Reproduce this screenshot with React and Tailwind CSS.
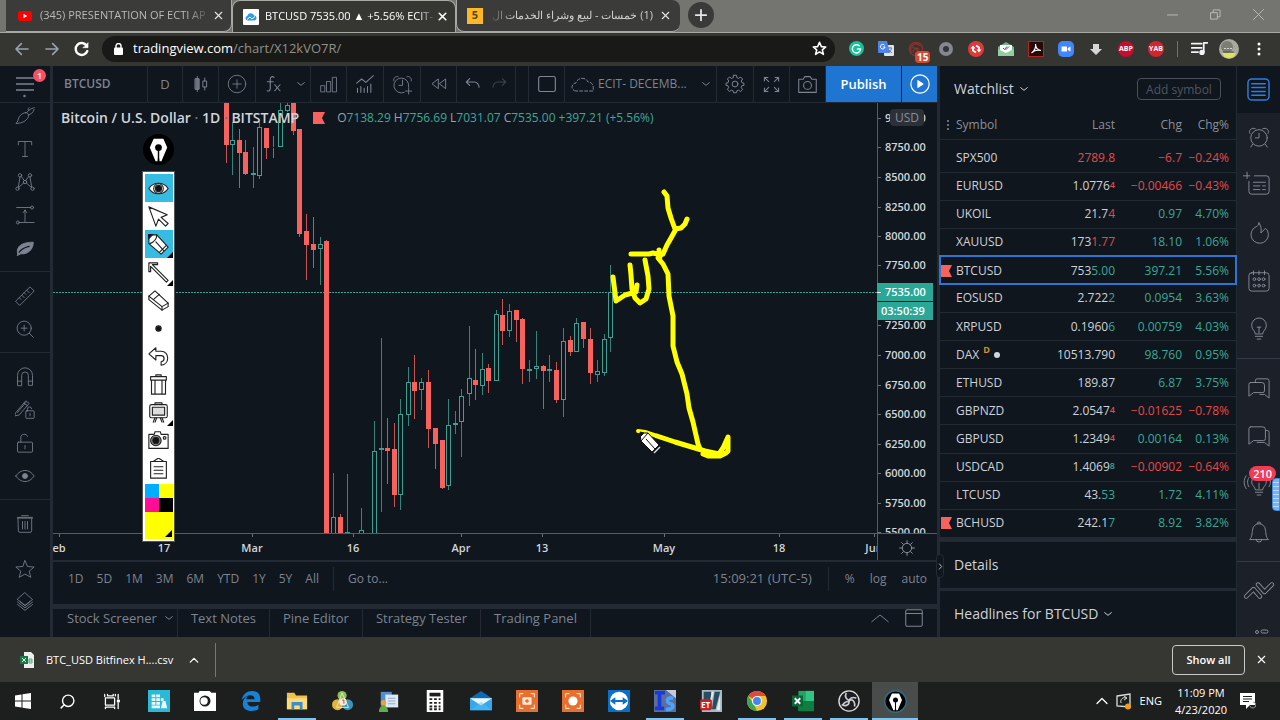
import React from 'react';
import { Search, X } from 'lucide-react';

const UP = '#3f9f92';
const DOWN = '#f7625f';

// [x, wick top, body top, body bottom, wick bottom, rising]
const candles = [
    [226, 103, 103, 145, 163, 0],
    [232, 122, 140, 145, 175, 1],
    [239, 129, 140, 153, 188, 0],
    [245, 140, 152, 174, 175, 0],
    [253, 147, 173, 175, 188, 1],
    [259, 122, 127, 176, 179, 1],
    [266, 128, 128, 148, 159, 0],
    [273, 136, 147, 148, 158, 0],
    [280, 103, 110, 147, 147, 1],
    [287, 103, 105, 111, 112, 1],
    [293, 103, 103, 131, 135, 0],
    [299, 129, 129, 234, 237, 0],
    [306, 214, 231, 245, 280, 0],
    [313, 217, 244, 250, 268, 0],
    [320, 237, 244, 249, 285, 1],
    [326, 240, 241, 536, 536, 0],
    [333, 473, 517, 536, 536, 1],
    [340, 514, 517, 536, 536, 0],
    [347, 474, 532, 536, 536, 1],
    [361, 508, 530, 536, 536, 1],
    [374, 421, 451, 536, 536, 1],
    [381, 338, 448, 450, 512, 1],
    [387, 418, 448, 451, 484, 0],
    [394, 423, 449, 495, 507, 0],
    [400, 399, 414, 495, 510, 1],
    [408, 367, 382, 415, 426, 1],
    [414, 355, 382, 391, 419, 0],
    [421, 378, 382, 390, 410, 1],
    [428, 370, 382, 429, 448, 0],
    [435, 428, 428, 444, 469, 0],
    [442, 440, 440, 488, 489, 0],
    [448, 399, 425, 486, 490, 1],
    [455, 411, 423, 425, 434, 1],
    [461, 389, 396, 422, 457, 1],
    [469, 326, 378, 394, 406, 1],
    [475, 349, 380, 385, 400, 0],
    [482, 353, 369, 386, 395, 1],
    [488, 364, 368, 381, 393, 0],
    [496, 310, 314, 381, 381, 1],
    [502, 299, 315, 331, 345, 0],
    [509, 304, 311, 331, 337, 1],
    [516, 310, 310, 320, 342, 0],
    [522, 318, 319, 369, 384, 0],
    [529, 360, 369, 371, 382, 1],
    [536, 331, 366, 369, 379, 1],
    [543, 365, 366, 371, 409, 0],
    [549, 355, 369, 371, 382, 1],
    [556, 362, 370, 400, 403, 0],
    [563, 328, 341, 400, 417, 1],
    [570, 336, 340, 352, 356, 0],
    [576, 318, 323, 352, 352, 1],
    [583, 322, 322, 339, 348, 0],
    [590, 328, 339, 373, 384, 0],
    [597, 360, 371, 375, 382, 1],
    [604, 334, 339, 373, 376, 1],
    [610, 265, 292, 338, 352, 1],
];

const prices = [
    ['9000.00', 118], ['8750.00', 147], ['8500.00', 177], ['8250.00', 207], ['8000.00', 236],
    ['7750.00', 265], ['7250.00', 325], ['7000.00', 355], ['6750.00', 385], ['6500.00', 414],
    ['6250.00', 444], ['6000.00', 473], ['5750.00', 503], ['5500.00', 532],
];

const dates = [
    ['eb', 59], ['17', 164], ['Mar', 252], ['16', 353], ['Apr', 461], ['13', 542], ['May', 664], ['18', 779], ['Jun', 874],
];

// last price is split where the latest tick changed it
const watchlist = [
    { symbol: 'SPX500', base: '', tick: '2789.8', tickUp: false, chg: '−6.7', pct: '−0.24%' },
    { symbol: 'EURUSD', base: '1.0776', tick: '4', tickUp: false, small: true, chg: '−0.00466', pct: '−0.43%' },
    { symbol: 'UKOIL', base: '21.7', tick: '4', tickUp: false, chg: '0.97', pct: '4.70%' },
    { symbol: 'XAUUSD', base: '173', tick: '1.77', tickUp: false, chg: '18.10', pct: '1.06%' },
    { symbol: 'BTCUSD', base: '753', tick: '5.00', tickUp: true, chg: '397.21', pct: '5.56%', flag: true, active: true },
    { symbol: 'EOSUSD', base: '2.722', tick: '2', tickUp: true, chg: '0.0954', pct: '3.63%' },
    { symbol: 'XRPUSD', base: '0.1960', tick: '6', tickUp: true, chg: '0.00759', pct: '4.03%' },
    { symbol: 'DAX', base: '10513.790', tick: '', chg: '98.760', pct: '0.95%', delayed: true },
    { symbol: 'ETHUSD', base: '189.87', tick: '', chg: '6.87', pct: '3.75%' },
    { symbol: 'GBPNZD', base: '2.0547', tick: '4', tickUp: false, small: true, chg: '−0.01625', pct: '−0.78%' },
    { symbol: 'GBPUSD', base: '1.2349', tick: '4', tickUp: false, small: true, chg: '0.00164', pct: '0.13%' },
    { symbol: 'USDCAD', base: '1.4069', tick: '8', tickUp: true, small: true, chg: '−0.00902', pct: '−0.64%' },
    { symbol: 'LTCUSD', base: '43.', tick: '53', tickUp: true, chg: '1.72', pct: '4.11%' },
    { symbol: 'BCHUSD', base: '242.1', tick: '7', tickUp: true, chg: '8.92', pct: '3.82%', flag: true },
];

function Icon({ size = 24, className = '', width = 1, children }) {
    return (
        <svg
            width={size}
            height={size}
            viewBox="0 0 24 24"
            fill="none"
            stroke="currentColor"
            strokeWidth={width}
            strokeLinecap="round"
            strokeLinejoin="round"
            className={`shrink-0 ${className}`}
            aria-hidden="true"
        >
            {children}
        </svg>
    );
}

function Chevron({ className = '' }) {
    return <Icon size={8} width={3} className={className}><path d="M2 8l10 8 10-8" /></Icon>;
}

/* ---------- browser window ---------- */

function TabBar() {
    return (
        <div className="flex h-8 items-stretch bg-[#747571] pl-1.5 text-xs">
            <div className="flex w-[226px] min-w-0 items-center rounded-br-lg border-b border-r border-[#a8a8a5] bg-[#3b3b39] pl-3 pr-1.5">
                <svg width="14" height="10" viewBox="0 0 14 10" className="shrink-0"><rect width="14" height="10" rx="2.5" fill="#f00" /><path d="M5.5 2.8v4.4L9.3 5z" fill="#fff" /></svg>
                <span className="ml-2 flex-1 whitespace-nowrap text-[11px] text-[#b9b9b7] [mask-image:linear-gradient(to_right,#000_85%,transparent)]">(345) PRESENTATION OF ECTI AP</span>
                <button aria-label="Close tab" className="text-gray-200"><X size={13} strokeWidth={2} /></button>
            </div>
            <div className="flex w-[224px] min-w-0 items-center rounded-t-lg border-x border-t border-[#a8a8a5] bg-[#363633] pl-2.5 pr-1.5">
                <svg width="16" height="16" viewBox="0 0 16 16" className="shrink-0">
                    <rect width="16" height="16" rx="1" fill="#fff" />
                    <path d="M4.5 11.5a2.3 2.3 0 0 1-.3-4.5A3.6 3.6 0 0 1 11 6.4a2.6 2.6 0 0 1 .6 5.1z" fill="#2f9be8" />
                    <path d="M4 10.5L7 8l2 2 3-2.5" stroke="#fff" fill="none" />
                </svg>
                <span className="ml-1.5 flex-1 whitespace-nowrap text-[11px] text-white [mask-image:linear-gradient(to_right,#000_90%,transparent)]">BTCUSD 7535.00 ▲ +5.56% ECIT-</span>
                <button aria-label="Close tab" className="text-white"><X size={13} strokeWidth={3} /></button>
            </div>
            <div className="flex w-[224px] min-w-0 items-center rounded-b-lg rounded-tr-lg border-b border-l border-[#a8a8a5] bg-[#3b3b39] pl-2.5 pr-2">
                <span className="flex size-4 shrink-0 items-center justify-center bg-[#fcb827] text-[11px] font-bold text-[#5a4310]">5</span>
                <span dir="rtl" className="ml-1.5 flex-1 whitespace-nowrap text-[11px] text-[#cfcfcd] [mask-image:linear-gradient(to_left,#000_85%,transparent)]">(1) خمسات - لبيع وشراء الخدمات ال</span>
                <button aria-label="Close tab" className="ml-1.5 text-gray-200"><X size={13} strokeWidth={2} /></button>
            </div>
            <button aria-label="New tab" className="ml-2 mt-0.5 flex size-[26px] items-center justify-center rounded-full bg-[#3a3a38] text-gray-200">
                <Icon size={14} width={3}><path d="M12 3v18M3 12h18" /></Icon>
            </button>
            <div className="ml-auto flex items-center gap-8 pb-1 pr-4 text-[#bdbdbb]">
                <button aria-label="Minimize"><Icon size={11} width={2}><path d="M1 13h22" /></Icon></button>
                <button aria-label="Restore"><Icon size={11} width={2}><path d="M2 8h14v14H2zM7 8V2h15v15h-6" /></Icon></button>
                <button aria-label="Close"><Icon size={11} width={2}><path d="M1 1l22 22M23 1L1 23" /></Icon></button>
            </div>
        </div>
    );
}

function Extensions() {
    return (
        <div className="flex items-center">
            <button aria-label="Grammarly" className="flex w-[30px] justify-center">
                <span className="flex size-[15px] items-center justify-center rounded-full bg-[#15c39a]">
                    <Icon size={11} width={3} className="text-white"><path d="M18 6a9 9 0 1 0 3 7h-7" /></Icon>
                </span>
            </button>
            <button aria-label="Translate" className="flex w-[30px] justify-center">
                <svg width="16" height="16" viewBox="0 0 16 16">
                    <rect x="6" y="4" width="10" height="11" rx="1" fill="#dfe3ea" />
                    <path d="M0 0h9l3 12H1a1 1 0 0 1-1-1z" fill="#4c84e8" />
                    <path d="M6.5 4.2A2.3 2.3 0 1 0 7 6H5" stroke="#fff" fill="none" />
                    <path d="M10 7h4M12 6v1m1.5 0c0 2-2 4-3 4.500M11 9l3 3" stroke="#5b6b85" fill="none" strokeWidth=".8" />
                </svg>
            </button>
            <button aria-label="Blocked, 15" className="relative flex w-[30px] justify-center">
                <Icon size={16} width={2} className="text-[#8f2f2a]"><circle cx="12" cy="12" r="10" /><path d="M5 16a8 8 0 0 1 13-9M8 17a5 5 0 0 1 8-5M6 8l12 9" /></Icon>
                <span className="absolute -bottom-1.5 left-3.5 rounded-sm bg-[#d9492f] px-0.5 text-[10px] font-bold leading-3 text-white">15</span>
            </button>
            <button aria-label="Lens" className="flex w-[30px] justify-center">
                <span className="flex size-[14px] items-center justify-center rounded-full bg-[#85868f]"><span className="size-1.5 rounded-full bg-[#33343a]" /></span>
            </button>
            <button aria-label="Refresh helper" className="flex w-[30px] justify-center">
                <svg width="16" height="16" viewBox="0 0 16 16"><circle cx="8" cy="8" r="8" fill="#e0393a" /><path d="M5 6v3.500l3 2M11 10V6.500l-3-2" stroke="#fff" strokeWidth="1.800" fill="none" /><path d="M2.500 7.500l2.500-3 2.500 3zM8.500 8.500l2.500 3 2.500-3z" fill="#fff" /></svg>
            </button>
            <button aria-label="Mail tracker" className="flex w-[30px] justify-center">
                <svg width="16" height="14" viewBox="0 0 16 14">
                    <path d="M0 5l8-5 8 5v9H0z" fill="#6fb583" /><path d="M2 3h12v6l-6 3-6-3z" fill="#fff" />
                    <path d="M5 6l1.500 1.500L9 4.500M7.500 7L8 7.500 11 4.500" stroke="#557" fill="none" /><path d="M0 7l8 4 8-4v7H0z" fill="#8fd0a0" />
                </svg>
            </button>
            <button aria-label="PDF" className="flex w-[30px] justify-center">
                <svg width="16" height="16" viewBox="0 0 16 16">
                    <rect x=".5" y=".5" width="15" height="15" fill="#260a0a" stroke="#b3261e" />
                    <path d="M7.500 3c1 3-1 7-4 9M7.500 3c0 4 2 6 5.500 6.500M4 11.500C6 9.500 9 8.800 13 9.500" stroke="#fff" fill="none" strokeWidth="1.200" />
                </svg>
            </button>
            <button aria-label="Zoom" className="flex w-[30px] justify-center">
                <svg width="16" height="16" viewBox="0 0 16 16"><rect width="16" height="16" rx="5" fill="#4087fc" /><path d="M3.500 5.500h5.500v5H3.500zM9.800 7l2.700-1.500v5L9.800 9z" fill="#fff" /></svg>
            </button>
            <button aria-label="Downloader" className="flex w-[30px] justify-center">
                <svg width="12" height="12" viewBox="0 0 12 12"><path d="M3 1h6v5h3l-6 6-6-6h3z" fill="#d6d6d6" /></svg>
            </button>
            <button aria-label="Adblock Plus" className="flex w-[30px] justify-center">
                <span className="flex size-4 items-center justify-center rounded-full bg-[#c70d2c] text-[7px] font-bold text-white">ABP</span>
            </button>
            <button aria-label="YAB" className="flex w-[30px] justify-center">
                <span className="flex size-4 items-center justify-center rounded-full bg-[#d3242f] text-[7px] font-bold text-white">YAB</span>
            </button>
            <span className="mx-1.5 h-4 w-px bg-gray-500" />
            <button aria-label="Media" className="flex w-[30px] justify-center text-gray-100">
                <Icon size={17} width={2.500}><path d="M1 5h14M1 11h14M1 17h9M18 17V4h5" /><circle cx="15.500" cy="17.500" r="2.500" fill="currentColor" /></Icon>
            </button>
            <button aria-label="Profile" className="flex w-[30px] justify-center">
                <svg width="20" height="20" viewBox="0 0 20 20"><circle cx="10" cy="10" r="10" fill="#a9a9a2" /><path d="M3 14h14l-2 3.500a9 9 0 0 1-10 0z" fill="#dfe35a" /><circle cx="8" cy="8" r="6" fill="#7c7d74" /><path d="M5 9.500h9" stroke="#d6d7cf" strokeDasharray="2 1" /><path d="M4 13h11" stroke="#4c4d46" /></svg>
            </button>
            <button aria-label="Menu" className="flex w-[30px] justify-center text-white">
                <svg width="4" height="14" viewBox="0 0 4 14" fill="currentColor"><circle cx="2" cy="2" r="1.500" /><circle cx="2" cy="7" r="1.500" /><circle cx="2" cy="12" r="1.500" /></svg>
            </button>
        </div>
    );
}

function AddressBar() {
    return (
        <div className="flex h-[34px] items-center border-t border-[#a8a8a5] bg-[#353532] pb-0.5 pr-1.5">
            <div className="flex items-center gap-[14px] pl-3.5">
                <button aria-label="Back" className="text-gray-400"><Icon size={16} width={2.500}><path d="M21 12H3M11 4l-8 8 8 8" /></Icon></button>
                <button aria-label="Forward" className="text-gray-400"><Icon size={16} width={2.500}><path d="M3 12h18M13 4l8 8-8 8" /></Icon></button>
                <button aria-label="Reload" className="text-white"><Icon size={16} width={3.500}><path d="M20 15a9 9 0 1 1-1-8" /><path d="M21 3v7h-7z" fill="currentColor" strokeWidth="1" /></Icon></button>
            </div>
            <div className="ml-3 flex h-[26px] min-w-0 flex-1 items-center rounded-full bg-[#191a18] pl-3 pr-2">
                <svg width="9" height="12" viewBox="0 0 9 12" className="shrink-0"><rect y="4.500" width="9" height="7.500" rx="1" fill="#fff" /><path d="M2 5V3a2.500 2.500 0 0 1 5 0v2" stroke="#fff" strokeWidth="1.400" fill="none" /></svg>
                <a href="#chart" className="ml-2.5 flex-1 text-[13px] text-[#8f918d]"><span className="text-white">tradingview.com</span>/chart/X12kVO7R/</a>
                <button aria-label="Bookmark" className="text-white"><Icon size={15} width={2.500}><path d="M12 2l3 7 7 .600-5.500 4.700 1.800 7.200L12 17.500l-6.300 4 1.800-7.200L2 9.600 9 9z" /></Icon></button>
            </div>
            <div className="ml-1.5"><Extensions /></div>
        </div>
    );
}

/* ---------- trading app ---------- */

function ToolButton({ label, className = '', children }) {
    return (
        <button aria-label={label} className={`flex h-full shrink-0 items-center justify-center border-r border-[#232a34] ${className}`}>
            {children}
        </button>
    );
}

function TopToolbar() {
    return (
        <header className="flex h-[37px] items-stretch border-b border-[#232a34] text-[#7d8390]">
            <button aria-label="Open menu" className="relative flex w-[50px] shrink-0 justify-center pt-2.5">
                <svg width="18" height="22" viewBox="0 0 18 22" stroke="currentColor" strokeWidth="1.500"><path d="M0 2h18M0 8h18M0 14h18" /><circle cx="8.500" cy="20" r="1" fill="currentColor" strokeWidth="0.500" /></svg>
                <span className="absolute left-[33px] top-[3px] flex size-[13px] items-center justify-center rounded-full bg-[#f8506a] text-[9px] font-semibold text-white">1</span>
            </button>
            <div className="w-[3px] shrink-0 bg-[#232a34]" />
            <button className="w-[95px] shrink-0 border-r border-[#232a34] pl-[11px] text-left text-xs font-semibold">BTCUSD</button>
            <ToolButton label="Interval" className="w-[35px] text-[13px]">D</ToolButton>
            <ToolButton label="Chart style" className="w-9">
                <Icon size={18} width={1.300}><path d="M7 2v3M7 19v3M17 4v4M17 16v4" /><rect x="4.500" y="5" width="5" height="14" fill="#6b717d" /><rect x="15" y="8" width="4.500" height="8" /></Icon>
            </ToolButton>
            <ToolButton label="Compare" className="w-[37px]"><Icon size={20}><circle cx="12" cy="12" r="10.500" /><path d="M12 7v10M7 12h10" /></Icon></ToolButton>
            <ToolButton label="Indicators" className="w-[55px] gap-3.5 pl-1">
                <Icon size={18} width={1.500}><path d="M12 3c-3-2-5 0-5 3v12c0 3-2 4-4 3M3 9h8M13 13l7 8M20 13l-7 8" /></Icon>
                <Chevron />
            </ToolButton>
            <ToolButton label="Financials" className="w-9"><Icon size={20}><path d="M2 21v-7h5v7zM9 21V9h5v12zM16 21V4h5v17z" /></Icon></ToolButton>
            <ToolButton label="Templates" className="w-[37px]"><Icon size={20} width={1.300}><path d="M2 11l6-5 5 4 9-8M3 17v5M7 15v7M11 17v5M15 15v7M19 12v10" /></Icon></ToolButton>
            <ToolButton label="Alert" className="w-[37px]"><Icon size={21}><path d="M19 15a8.500 8.500 0 1 0-5 6M12 7v6H8M2 8c-1-3 2-6 5-5M22 8c1-3-2-6-5-5M19 16v7M15.500 19.500h7" /></Icon></ToolButton>
            <ToolButton label="Replay" className="w-9"><Icon size={16} width={1.400}><path d="M11 5v14L2 12zM22 5v14l-9-7z" /></Icon></ToolButton>
            <ToolButton label="Undo and redo" className="w-[59px] gap-2.5">
                <Icon size={16} width={1.600}><path d="M7 4L2 9l5 5M2 9h12c4 0 7 4 7 8" /></Icon>
                <Icon size={16} width={1.600} className="opacity-40"><path d="M17 4l5 5-5 5M22 9H10c-4 0-7 4-7 8" /></Icon>
            </ToolButton>
            <div className="min-w-3 flex-1 border-r border-[#232a34]" />
            <ToolButton label="Layout" className="w-9"><Icon size={20} width={1.400}><rect x="2" y="3" width="20" height="18" rx="2" /></Icon></ToolButton>
            <button className="flex w-[152px] shrink-0 items-center border-r border-[#232a34] pl-1.5 text-xs">
                <Icon size={24} className="mr-[3px]"><path strokeDasharray="3 2" d="M5 19a4 4 0 0 1 0-8c1-5 9-7 12-1 5 0 6 5 5 9z" /></Icon>
                <span className="whitespace-nowrap">ECIT- DECEMB...</span>
                <Chevron className="ml-auto mr-1.5" />
            </button>
            <ToolButton label="Settings" className="w-[37px]">
                <Icon size={20} width={1.200}><circle cx="12" cy="12" r="3.500" /><path d="M10.300 1.500h3.400l.600 2.900 2 .800L18.700 3.600l2.400 2.400-1.600 2.400.8 2 2.400.600v2.600l-2.500.500-.8 2 1.700 2.500-2.400 2.400-2.500-1.600-2 .800-.500 2.300h-3.400l-.600-2.300-2-.800-2.500 1.600-2.300-2.400 1.500-2.500-.800-2-2.400-.500V11l2.500-.600.800-2L2.900 6l2.400-2.400 2.500 1.600 2-.800z" /></Icon>
            </ToolButton>
            <ToolButton label="Fullscreen" className="w-9"><Icon size={17} width={1.500}><path d="M2 7V2h5M2 2l6 6M17 2h5v5M22 2l-6 6M2 17v5h5M2 22l6-6M22 17v5h-5M22 22l-6-6" /></Icon></ToolButton>
            <ToolButton label="Snapshot" className="w-9"><Icon size={21} width={1.200}><path d="M2 6h5l2-3h6l2 3h5v15H2z" /><circle cx="12" cy="13" r="4.500" /></Icon></ToolButton>
            <button className="w-[75px] shrink-0 bg-[#1e76d2] text-[13px] font-semibold text-white">Publish</button>
            <button aria-label="Play" className="ml-px flex w-[35px] shrink-0 items-center justify-center bg-[#1e76d2] text-white">
                <Icon size={20} width={1.400}><circle cx="12" cy="12" r="11" /><path d="M9.500 8v8l6-4z" fill="currentColor" /></Icon>
            </button>
        </header>
    );
}

const drawTools = [
    ['Brush', <path d="M23 2c-4 1-7 3-9 6M23 4c-1 4-4 6-7 7M13 8c4 1 4 4 2 7-3 4-8 6-14 6 3-2 2-4 4-8 2-3 5-5 8-5zM17 2c-2 1-2 3 0 3" />],
    ['Text', <path d="M4 7V3h16v4M12 3v18M9 21h6" />],
    ['Patterns', <><circle cx="6" cy="4" r="2" /><circle cx="18" cy="4" r="2" /><circle cx="3" cy="20" r="2" /><circle cx="21" cy="20" r="2" /><circle cx="12" cy="12" r="2" /><path d="M6 6L4 18M18 6l2 12M7.500 5.500L11 10M16.500 5.500L13 10M4.500 18.500L10.500 13M19.500 18.500L13.500 13" /></>],
    ['Forecast', <><path d="M2 3h17M5 21h18M12 20V6M10 9l2-3 2 3" /><circle cx="20.500" cy="3" r="1.800" /><circle cx="3.500" cy="21" r="1.800" /></>],
    ['Icons', <><path fill="currentColor" d="M3 19c-2-9 5-14 19-14 0 9-7 15-15 14l-4 2z" /><path d="M5 17c3-4 7-6 12-7" stroke="#0f161e" strokeWidth="1.500" /></>],
    null,
    ['Measure', <path d="M1 18L18 1l5 5L6 23zM5 14l2 2M8 11l3 3M11 8l2 2M14 5l3 3" />],
    ['Zoom in', <><circle cx="11" cy="11" r="8.500" /><path d="M17 17l5 5M11 7.500v7M7.500 11h7" /></>],
    null,
    ['Magnet', <path d="M3 22V10a9 9 0 0 1 18 0v12h-5V10a4 4 0 0 0-8 0v12zM3 17h5M16 17h5" />],
    ['Lock drawings', <><path d="M1 15L13 1l4 3L5 18l-5 1zM11 4l4 3M3 15l10-12" /><rect x="13" y="13" width="10" height="9" rx="1" /><path d="M15 13v-2a2.500 2.500 0 0 1 5-.500M18 16v3" /></>],
    ['Unlock', <><rect x="3" y="11" width="18" height="12" rx="1" /><path d="M7 11V5c0-4 7-5 8-1M12 15v4" /></>],
    ['Hide drawings', <><path d="M1 12c6-9 16-9 22 0-6 9-16 9-22 0z" /><circle cx="12" cy="12" r="3" fill="currentColor" /></>],
    null,
    ['Remove', <path d="M4 5h16v15a2 2 0 0 1-2 2H6a2 2 0 0 1-2-2zM3 5V4h18v1M8 2h8M9 9v9M12 9v9M15 9v9" />],
];

function DrawingToolbar() {
    return (
        <nav aria-label="Drawing tools" className="w-[50px] shrink-0 overflow-hidden text-[#7d8390]">
            <div className="-mt-1 flex flex-col">
                {drawTools.map((tool, i) =>
                    tool ? (
                        <button key={tool[0]} aria-label={tool[0]} className="flex h-[33px] items-center justify-center">
                            <Icon size={20}>{tool[1]}</Icon>
                        </button>
                    ) : (
                        <hr key={i} className="my-[7px] border-[#232a34]" />
                    )
                )}
                <button aria-label="Favorites" className="mt-3 flex h-[33px] items-center justify-center">
                    <Icon size={20}><path d="M12 2l3 7 8 .600-6 5 2 7.400-7-4-7 4 2-7.400-6-5L9 9z" /></Icon>
                </button>
                <button aria-label="Object tree" className="flex h-[33px] items-center justify-center">
                    <Icon size={20}><path d="M12 1l9 8-9 7-9-7zM3 12l9 7 9-7M3 15l9 7 9-7M6 11.500l6 5 6-5" /></Icon>
                </button>
            </div>
        </nav>
    );
}

function Chart() {
    return (
        <svg viewBox="53 103 884 457" className="block h-full w-full" role="img" aria-label="BTCUSD daily candles">
            <defs>
                <clipPath id="plot"><rect x="53" y="103" width="884" height="430" /></clipPath>
                <clipPath id="time"><rect x="53" y="533" width="824" height="27" /></clipPath>
            </defs>
            <path d="M53 292.500H877" stroke={UP} strokeDasharray="2 1" />
            <g clipPath="url(#plot)">
                {candles.map(([x, high, top, bottom, low, rising]) => (
                    <g key={x} stroke={rising ? UP : DOWN}>
                        <path d={`M${x + 0.5} ${high}V${top}M${x + 0.5} ${bottom}V${low}`} strokeOpacity={0.8} />
                        {rising ? (
                            <rect x={x - 1.5} y={top + 0.5} width={4} height={Math.max(bottom - top - 1, 1)} fill="#0f161e" />
                        ) : (
                            <rect x={x - 1.5} y={top + 0.5} width={4} height={Math.max(bottom - top - 1, 0)} fill={DOWN} />
                        )}
                    </g>
                ))}
                {prices.map(([text, y]) => (
                    <g key={text}>
                        <path d={`M877 ${y + 0.5}h4`} stroke="#6a707b" />
                        <text x="885" y={y + 4} fill="#d3d5da" fontSize="11" fontWeight="600">{text}</text>
                    </g>
                ))}
            </g>
            <path d="M877.500 103V560M53 533.500H937" stroke="#565c66" fill="none" />
            <g clipPath="url(#time)" fontSize="11" fontWeight="600" fill="#d3d5da" textAnchor="middle">
                {dates.map(([text, x]) => (
                    <g key={text}>
                        <path d={`M${x + 0.5} 534v3`} stroke="#6a707b" />
                        <text x={x} y="552">{text}</text>
                    </g>
                ))}
            </g>
            <rect x="877" y="283" width="56" height="18" fill="#2ba798" />
            <rect x="877" y="302" width="56" height="18" fill="#2ba798" />
            <path d="M877 292.500h4" stroke="#fff" />
            <text x="885" y="296" fill="#fff" fontSize="11" fontWeight="600">7535.00</text>
            <text x="881" y="315" fill="#fff" fontSize="11" fontWeight="600">03:50:39</text>
            <g stroke="#ff0" strokeWidth="5" fill="none" strokeLinecap="round" strokeLinejoin="round">
                <path d="M664 192l3 4 1 12 3 10 4 11 6-1 4-4 2-5M676 229l-5 9-4 7-4 9" />
                <path d="M631 254h18l4-1 8 2M659 250l1 7" />
                <path d="M658 258l5 6 5 10 1 22 4 20v30l4 16 5 12 5 20 2 14 4 14 5 22 2 5" />
                <path d="M703 454l5 2h12l6-3 2-2v-14l-5 11-4 6-14-3-30-9-18-6" />
                <path strokeWidth="4" d="M657 436l-12-4-7-1" />
                <path d="M613 277l1 8 2 16 9-6 11-3 1-7M630 265l1 10 1 14 3 9 5 5 6-4 3-10-1-13-3-16" />
            </g>
            <g transform="translate(640 432)" stroke="#111" strokeWidth="1" fill="#fff">
                <path d="M0 1l8 0 11 12-7 7L1 9z" /><path d="M8 1L1 9M6 7l9 10" fill="none" /><path d="M14 21l6-6" fill="none" stroke="#ddd" strokeWidth="1.500" /><path d="M0 0l4 1-3 3z" fill="#111" />
            </g>
        </svg>
    );
}

function ChartPane() {
    return (
        <section className="relative min-h-0 flex-1">
            <Chart />
            <div className="absolute left-2 top-[5px] flex items-center whitespace-nowrap">
                <h1 className="text-sm font-semibold leading-5 text-[#d3d5da]">Bitcoin / U.S. Dollar <span className="text-gray-500">·</span> 1D <span className="text-gray-500">·</span> BITSTAMP</h1>
                <svg width="12" height="12" viewBox="0 0 12 12" className="ml-3.5"><path d="M0 0h12L9 6l3 6H0z" fill="#f7625f" /></svg>
                <p className="ml-3 flex gap-[3px] text-xs leading-none text-[#3fa698]">
                    <span><span className="text-gray-400">O</span>7138.29</span>
                    <span><span className="text-gray-400">H</span>7756.69</span>
                    <span><span className="text-gray-400">L</span>7031.07</span>
                    <span><span className="text-gray-400">C</span>7535.00</span>
                    <span>+397.21 (+5.56%)</span>
                </p>
            </div>
            <button className="absolute right-[13px] top-1.5 h-[17px] rounded bg-[#2b3039] px-[5px] text-xs leading-4 text-[#8a8f99]">USD</button>
            <button aria-label="Axis settings" className="absolute bottom-1 right-[22px] text-[#8a8f99]">
                <Icon size={16} width={1.500}><circle cx="12" cy="12" r="7" /><path d="M12 1v3M12 20v3M1 12h3M20 12h3M4 4l2.500 2.500M17.500 17.500L20 20M20 4l-2.500 2.500M4 20l2.500-2.500" /></Icon>
            </button>
        </section>
    );
}

function RangeBar() {
    return (
        <div className="flex h-11 shrink-0 items-center border-t-2 border-[#232a34] pb-2 pl-[15px] pr-2.5 text-xs text-[#7d8390]">
            <div className="flex gap-[13px]">
                {['1D', '5D', '1M', '3M', '6M', 'YTD', '1Y', '5Y', 'All'].map((range) => <button key={range}>{range}</button>)}
            </div>
            <span className="mx-3.5 h-6 w-px bg-[#232a34]" />
            <button>Go to...</button>
            <button className="ml-auto text-[13px]">15:09:21 (UTC-5)</button>
            <span className="mx-4 h-6 w-px bg-[#232a34]" />
            <div className="flex gap-[15px]"><button>%</button><button>log</button><button>auto</button></div>
        </div>
    );
}

function BottomTabs() {
    return (
        <div className="flex h-[33px] shrink-0 items-center border-t-[5px] border-[#232a34] text-[13px] text-[#7d8390]">
            <button className="flex h-full items-center gap-2 border-r border-[#232a34] pb-2.5 pl-3.5 pr-1">Stock Screener <Chevron /></button>
            {['Text Notes', 'Pine Editor', 'Strategy Tester', 'Trading Panel'].map((tab) => (
                <button key={tab} className="h-full border-r border-[#232a34] px-[13px] pb-2.5">{tab}</button>
            ))}
            <div className="ml-auto flex items-center gap-4 pb-2.5 pr-3.5">
                <button aria-label="Expand panel"><Icon size={18} width={1.300}><path d="M1 17l11-9 11 9" /></Icon></button>
                <button aria-label="Maximize panel"><Icon size={18} width={1.400}><rect x="1" y="1" width="22" height="22" rx="2" /><path d="M1 6h22" /></Icon></button>
            </div>
        </div>
    );
}

function WatchRow({ row }) {
    const tone = row.chg.startsWith('−') ? 'text-[#e5494a]' : 'text-[#3da796]';
    const tick = row.tickUp ? 'text-[#3da796]' : 'text-[#e5494a]';
    return (
        <tr className={`h-7 ${row.active ? 'outline-2 -outline-offset-1 outline-[#2f74d0]' : 'border-b border-[#232a34]'}`}>
            <td className="whitespace-nowrap p-0 text-left text-[#cfd1d6]">
                <span className="flex items-center">
                    <span className="w-4">
                        {row.flag && <svg width="11" height="12" viewBox="0 0 11 12" className="ml-px"><path d="M0 0h11L8 6l3 6H0z" fill="#f7625f" /></svg>}
                    </span>
                    {row.symbol}
                    {row.delayed && <><sup className="ml-1 text-[9px] font-bold text-[#d98e2b]">D</sup><span className="ml-1 size-1.5 rounded-full bg-gray-300" /></>}
                </span>
            </td>
            <td className="p-0 text-[#cfd1d6]">{row.base}<span className={row.small ? `align-[2px] text-[9px] font-semibold ${tick}` : tick}>{row.tick}</span></td>
            <td className={`p-0 ${tone}`}>{row.chg}</td>
            <td className={`p-0 pr-[7px] ${tone}`}>{row.pct}</td>
        </tr>
    );
}

function Watchlist() {
    return (
        <aside className="flex w-[300px] shrink-0 flex-col border-l-[3px] border-r border-[#232a34]">
            <div className="flex h-[46px] shrink-0 items-center pl-3.5 pr-[15px]">
                <button className="flex items-center gap-1.5 text-sm leading-none text-[#cfd1d6]">Watchlist <Chevron /></button>
                <input aria-label="Add symbol" placeholder="Add symbol" className="ml-auto h-[22px] w-[84px] rounded-sm border border-[#4a4f59] bg-transparent text-center text-xs placeholder:text-[#4f555f]" />
            </div>
            <div className="min-h-0 flex-1">
                <table className="h-full w-full table-fixed border-collapse text-right text-xs">
                    <thead>
                        <tr className="h-[27px] border-b border-[#232a34] text-[#8a8f99]">
                            <th className="w-[85px] p-0 text-left font-normal">
                                <span className="flex items-center">
                                    <svg width="4" height="12" viewBox="0 0 4 12" fill="currentColor" className="ml-1.5 mr-1.5"><circle cx="2" cy="2" r="1" /><circle cx="2" cy="6" r="1" /><circle cx="2" cy="10" r="1" /></svg>
                                    Symbol
                                </span>
                            </th>
                            <th className="p-0 font-normal">Last</th>
                            <th className="w-[67px] p-0 font-normal">Chg</th>
                            <th className="w-[54px] p-0 pr-[7px] font-normal">Chg%</th>
                        </tr>
                    </thead>
                    <tbody>
                        <tr className="h-[5px]"><td colSpan={4} className="p-0" /></tr>
                        {watchlist.map((row) => <WatchRow key={row.symbol} row={row} />)}
                    </tbody>
                </table>
            </div>
            <button className="relative h-[50px] shrink-0 border-t-4 border-[#232a34] pl-3.5 text-left text-sm leading-none text-[#cfd1d6]">
                Details
                <span className="absolute -left-1 top-3 flex h-6 w-2 items-center justify-center rounded border border-[#232a34] bg-[#0f161e]"><Icon size={7} width={3}><path d="M8 3l8 9-8 9" /></Icon></span>
            </button>
            <button className="flex h-[49px] shrink-0 items-center gap-1.5 border-t-[3px] border-[#232a34] pl-3.5 text-sm leading-none text-[#cfd1d6]">Headlines for BTCUSD <Chevron /></button>
        </aside>
    );
}

const sideTools = [
    ['Alerts', <><circle cx="12" cy="13" r="9" /><path d="M12 8v5H8M2 8c-2-3 2-7 6-5M22 8c2-3-2-7-6-5M5 20l-2 3M19 20l2 3" /></>],
    ['News', <><path d="M7 2h13a3 3 0 0 1 3 3v14a3 3 0 0 1-3 3H4a3 3 0 0 1-3-3V8M-1-2v7M-5 2h7M6 9h13M6 13h7M16 13h3M6 17h7M16 17h3" /></>],
    ['Hotlists', <path d="M12 1c0 2-1 3-3 4A9.500 9.500 0 1 0 21 9l-2-2-5 5c1-4 0-8-2-11z" />],
    ['Calendar', <><rect x="1" y="3" width="22" height="20" rx="3" /><path d="M6 1v4M12 1v4M18 1v4" /><circle cx="7" cy="10" r="1.500" /><circle cx="12" cy="10" r="1.500" /><circle cx="17" cy="10" r="1.500" /><circle cx="7" cy="17" r="1.500" /><circle cx="12" cy="17" r="1.500" /><circle cx="17" cy="17" r="1.500" /></>],
    ['Ideas', <path d="M8 17c0-3-4-4-4-9a8 8 0 0 1 16 0c0 5-4 6-4 9zM8 20h8M10 23h4M10 10h4M12 10v6" />],
    null,
    ['Public chats', <><path d="M8 6V4a2 2 0 0 1 2-2h11a2 2 0 0 1 2 2v19l-5-4h-5" /><path d="M3 6h12a3 3 0 0 1 3 3v6a2 2 0 0 1-2 2H6l-5 4V8a2 2 0 0 1 2-2z" /></>],
    ['Private chats', <><path d="M3 2h13a3 3 0 0 1 3 3v10a2 2 0 0 1-2 2H6l-5 4V4a2 2 0 0 1 2-2z" /><path d="M19 6h2a2 2 0 0 1 2 2v15l-5-4h-8" /></>],
    ['Ideas stream', <path d="M8 18c0-3-4-4-4-8a8 8 0 0 1 16 0c0 4-4 5-4 8zM8 21h8M10 24h4M1 5c-2 3-2 7 0 10M-2 3c-3 4-3 10 0 14M23 5c2 3 2 7 0 10M12 11v6" />],
    ['Notifications', <path d="M2 20c3-3 2-6 3-10a7 7 0 0 1 14 0c1 4 0 7 3 10zM10 3a2 2 0 0 1 4 0M9 20a3 3 0 0 0 6 0" />],
    null,
    ['Order panel', <><path d="M-2 18l8-8 7 8" strokeWidth="5" /><path d="M-2 18l8-8 7 8" strokeWidth="3" stroke="#1b2029" /><path d="M11 5l7 8 8-8" strokeWidth="5" /><path d="M11 5l7 8 8-8" strokeWidth="3" stroke="#1b2029" /></>],
];

function SideBar() {
    return (
        <nav aria-label="Widgets" className="flex w-[43px] shrink-0 flex-col overflow-hidden bg-[#1b2029] text-[#8a8f99]">
            <button aria-label="Watchlist" className="flex h-[47px] shrink-0 items-center justify-center bg-[#0f161e] text-[#2f7de0]">
                <Icon size={23} width={1.500}><rect x="1" y="1" width="22" height="22" rx="4" /><path d="M5 6h14M5 10h14M5 14h14M5 18h14" /></Icon>
            </button>
            {sideTools.map((tool, i) =>
                tool ? (
                    <button key={tool[0]} aria-label={tool[0]} className="relative flex h-12 shrink-0 items-center justify-center">
                        <Icon size={22} className="overflow-visible">{tool[1]}</Icon>
                        {tool[0] === 'Ideas stream' && (
                            <>
                                <span className="absolute right-1 top-1.5 rounded-full bg-[#f23b57] px-1 text-[11px] font-semibold leading-[15px] text-white">210</span>
                                <span className="absolute right-0 top-[18px] h-[33px] w-2 rounded-l-sm border border-[#3f8ee8] bg-[repeating-linear-gradient(#78b4f5_0_3px,#b9d9fa_3px_4px)]" />
                            </>
                        )}
                    </button>
                ) : (
                    <hr key={i} className="my-[5px] border-[#353b46]" />
                )
            )}
            <svg width="14" height="6" viewBox="0 0 14 6" fill="none" stroke="currentColor" className="ml-[18px] mt-3.5 shrink-0"><circle cx="2" cy="3" r="1.500" /><rect x="6" y="1" width="7" height="3" rx="1.500" /></svg>
        </nav>
    );
}

/* ---------- desktop ---------- */

function DownloadBar() {
    return (
        <div className="flex h-[45px] shrink-0 items-center bg-[#363632] pl-5 pr-3 text-[11px] text-white">
            <svg width="14" height="16" viewBox="0 0 14 16"><path d="M4 0h7l3 3v13H4z" fill="#eee" /><rect y="4" width="8" height="8" fill="#107c41" /><path d="M2 6l4 4M6 6l-4 4" stroke="#fff" /><path d="M9 7h3v4H9zM9 9h3" stroke="#5ba77b" fill="none" /></svg>
            <button className="ml-3">BTC_USD Bitfinex H....csv</button>
            <button aria-label="Download options" className="ml-4"><Icon size={10} width={3}><path d="M3 17l9-9 9 9" /></Icon></button>
            <span className="ml-4 h-[34px] w-px bg-[#777773]" />
            <button className="ml-auto h-[30px] w-[73px] rounded border border-[#c9c9c7] font-semibold">Show all</button>
            <button aria-label="Close downloads" className="ml-2.5"><X size={13} /></button>
        </div>
    );
}

const taskApps = [
    ['Grid keypad', 0, <><rect width="24" height="24" y="0" fill="#2cb9d6" /><path d="M4 5h4v3H4zM9 5h4v3H9zM4 9h4v3H4zM9 9h4v3H9zM14 9h3v3h-3zM4 13h4v3H4zM9 13h4v3H9zM4 17h9v3H4zM16 12h3l2 8h-7z" fill="#e9fbff" /></>],
    ['Camera', 0, <><path d="M0 3h5l1-2h11l2 2h5v20H0z" fill="#fff" /><circle cx="12" cy="12" r="6" fill="#1d1e1e" /><circle cx="11" cy="12" r="4" fill="#fff" /></>],
    ['Edge', 0, <path d="M2 11C3 4 8 1 13 1c7 0 10 5 9 12H8c0 5 7 7 12 3v5c-7 4-17 2-17-6 0-4 2-7 6-9-1 1-2 2-2 4h9c0-6-9-6-14 1z" fill="#1683d8" />],
    ['File Explorer', 1, <><path d="M1 3h8l2 3h12v15H1z" fill="#f2c14b" /><path d="M1 9h22v12H1z" fill="#fbdc7d" /><path d="M6 21v-8h12v8h-3v-4H9v4z" fill="#3e8ccb" /></>],
    ['MetaTrader', 0, <><circle cx="11" cy="6" r="5" fill="#8cc152" /><circle cx="6" cy="16" r="6" fill="#e0b43c" /><circle cx="17" cy="16" r="6" fill="#3f93b8" /><path d="M5 19l6-16 7 16z" fill="none" stroke="#dfe9d3" /><circle cx="12" cy="13" r="4" fill="#f7efdc" /><path d="M11 11h2v4" stroke="#c33" fill="none" /></>],
    ['Contacts', 0, <><path d="M3 2h12v16H3z" fill="#4e8ed1" /><path d="M8 5h14v14H8z" fill="#dfe9f5" /><path d="M11 9h8M11 12h8M11 15h8" stroke="#82a7d1" /><circle cx="6" cy="14" r="3" fill="#e8a04b" /><path d="M1 24c0-9 10-9 10 0z" fill="#5fae48" /></>],
    ['Calculator', 0, <><path d="M3 0h18v24H3z" fill="#fff" /><path d="M6 3h12v4H6z" fill="#1d1e1e" /><path d="M6 10h3M11 10h3M16 10h2M6 14h3M11 14h3M16 14h2M6 18h3M11 18h3M16 18h2M6 21h3M11 21h3M16 21h2" stroke="#1d1e1e" strokeWidth="2" /></>],
    ['Mail', 0, <><path d="M0 9l12-8 12 8v13H0z" fill="#1069b5" /><path d="M0 9h24v13H0z" fill="#35a7ea" /><path d="M0 9l12 8 12-8z" fill="#e8f6ff" /><path d="M0 22l12-9 12 9z" fill="#57bff5" opacity=".5" /></>],
    ['Screen capture', 0, <><path d="M0 0h24v24H0z" fill="#e8702e" /><path d="M4 8V4h4M16 4h4v4M4 16v4h4M20 16v4h-4" stroke="#fff" fill="none" /><rect x="7" y="8" width="10" height="8" rx="1" fill="#ffe9dc" /><circle cx="12" cy="12" r="2" fill="#e8702e" /></>],
    ['Screen recorder', 0, <><path d="M0 0h24v24H0z" fill="#e8702e" /><path d="M4 8V4h4M16 4h4v4M4 16v4h4M20 16v4h-4" stroke="#fff" fill="none" /><circle cx="12" cy="12" r="5" fill="#fff" /></>],
    ['TeamViewer', 0, <><path d="M0 0h24v24H0z" fill="#0c6fc7" /><circle cx="12" cy="12" r="10" fill="#fff" /><path d="M2 12l6-4v3h8V8l6 4-6 4v-3H8v3z" fill="#0c6fc7" /></>],
    ['IS', 1, <><path d="M0 0h24v24H0z" fill="#5d6f96" /><path d="M13 0h11v9z" fill="#c3cad8" /><path d="M1 3h11M6 3v17M1 20h10" stroke="#173ae0" strokeWidth="4" /><path d="M21 9c-8-2-8 5-3 6s3 7-5 6" stroke="#4fa0ff" strokeWidth="4" fill="none" /></>],
    ['ET', 0, <><path d="M2 0h22v24H2z" fill="#a9b9c4" /><path d="M4 2h8v9H4zM16 2h6l-5 19h-4z" fill="#2e4c60" /><path d="M13 2h2l-4 18h-2zM22 5v17h-4z" fill="#e6edf1" /><rect y="10" width="13" height="12" rx="2" fill="#d01c24" /><text x="1" y="20" fontSize="9" fontWeight="700" fill="#fff">ET</text></>],
    ['Chrome', 1, <><circle cx="12" cy="12" r="11" fill="#f2c230" /><path d="M12 12L2.500 6.500A11 11 0 0 1 21.500 6.500H12z" fill="#df4a3c" /><path d="M2.500 6.500L8 15l4 8A11 11 0 0 1 2.500 6.500z" fill="#3aa757" /><circle cx="12" cy="12" r="5.500" fill="#fff" /><circle cx="12" cy="12" r="4.300" fill="#4285f4" /></>],
    ['Excel', 1, <><path d="M7 1h17v22H7z" fill="#21a366" /><path d="M15 1h9v11h-9z" fill="#33c481" /><path d="M7 12h17v11H7z" fill="#107c41" /><path d="M0 6h12v12H0z" fill="#0b6636" /><path d="M3 9l6 6M9 9l-6 6" stroke="#fff" strokeWidth="2" /></>],
    ['OBS', 1, <><circle cx="12" cy="12" r="11" fill="#1c1d22" stroke="#ddd" strokeWidth="1.500" /><path d="M9 3c-2 4 0 8 4 8 4-1 6 3 5 7M20 9c-4-2-8 0-8 4 0 4-5 5-8 3M5 17c1-4 4-4 7-5" stroke="#ccc" fill="none" strokeWidth="1.800" /></>],
];

function NibIcon({ size, ring = '#000' }) {
    return (
        <svg width={size} height={size} viewBox="0 0 32 32">
            <circle cx="16" cy="16" r="15" fill="#000" stroke={ring} strokeWidth="2" />
            <path d="M11 5h10l4 9-6 14h-2l-1-8-1 8h-2L7 14z" fill="#fff" />
            <circle cx="16" cy="14" r="3.500" fill="#000" />
            <path d="M16 15v13" stroke="#000" strokeWidth="1.500" />
        </svg>
    );
}

function Taskbar() {
    return (
        <footer className="flex h-[38px] shrink-0 items-stretch overflow-hidden bg-[#1d1e1e] text-white">
            <button aria-label="Start" className="flex w-[45px] shrink-0 items-center justify-center">
                <svg width="16" height="16" viewBox="0 0 16 16" fill="#fff"><path d="M0 2.500l6.500-1v6H0zM7.500 1.300L16 0v7.500H7.500zM0 8.500h6.500v6l-6.500-1zM7.500 8.500H16V16l-8.500-1.300z" /></svg>
            </button>
            <button aria-label="Search" className="flex w-[45px] shrink-0 items-center justify-center"><Search size={17} strokeWidth={2} className="-scale-x-100" /></button>
            <button aria-label="Task view" className="mr-px flex w-[45px] shrink-0 items-center justify-center">
                <Icon size={17} width={1.800}><path d="M2 7h13v10H2zM1 2v3M5 2v2h8V2M16 2v2M2 22v-2h13v2M20 2v6M20 14v8" /><rect x="19" y="10" width="2.500" height="2.500" fill="currentColor" /></Icon>
            </button>
            {taskApps.map(([name, open, icon]) => (
                <button key={name} aria-label={name} className="relative flex w-[46px] shrink-0 items-center justify-center">
                    <svg width="22" height="22" viewBox="0 0 24 24">{icon}</svg>
                    {open === 1 && <span className="absolute inset-x-1 bottom-0 h-0.5 bg-[#7fc4ee]" />}
                </button>
            ))}
            <button aria-label="Epic Pen" className="relative flex w-[46px] shrink-0 items-center justify-center bg-[#4a4b4b]">
                <NibIcon size={23} ring="#2c6f7c" />
                <span className="absolute inset-x-0 bottom-0 h-0.5 bg-[#7fc4ee]" />
            </button>
            <div className="ml-auto flex items-center gap-2 pr-6 text-xs">
                <button aria-label="Hidden icons"><Icon size={12} width={2.500}><path d="M2 17l10-10 10 10" /></Icon></button>
                <svg width="16" height="17" viewBox="0 0 16 17"><path d="M1 3l13-2v13l-13-1z" fill="none" stroke="#ddd" strokeWidth="1.300" /><path d="M5 10c-1-4 2-6 5-5M8 3l3 2-3 2" stroke="#ddd" fill="none" /><circle cx="12" cy="13.500" r="3" fill="#f59b1c" /></svg>
                <span className="text-[11px]">ENG</span>
                <time className="mx-1 w-[54px] text-center text-[11px] leading-[17px]">11:09 PM<br />4/23/2020</time>
                <button aria-label="Notifications"><svg width="16" height="16" viewBox="0 0 16 16"><path d="M0 0h15v12h-5l-4 4v-4H0z" fill="#fff" /><path d="M3 3.500h9M3 6h9M3 8.500h6" stroke="#1d1e1e" /><path d="M10 13a3 3 0 1 0 3-4" fill="none" stroke="#999" /></svg></button>
            </div>
        </footer>
    );
}

const penTools = [
    ['Toggle ink', true, false, <><path d="M1 12C6 4 18 4 23 12c-5 8-17 8-22 0z" fill="#fff" /><circle cx="12" cy="12" r="5.500" fill="#fff" /><circle cx="12" cy="12" r="3.500" fill="#111" /></>],
    ['Cursor', false, false, <path d="M1 1l21 9-7 3 8 7-3 3-8-8-3 8z" fill="#fff" />],
    ['Pen', true, true, <><path d="M1 1h9l13 14-8 8L1 11z" fill="#fff" /><path d="M10 1c0 5-3 8-8 10M9 9l9 10M13 21l8-8" /><path d="M0 0h6L0 6z" fill="#111" /></>],
    ['Arrow', false, true, <path d="M1 1h10v2H5l18 18-2 2L3 5v6H1z" fill="#fff" />],
    ['Eraser', false, false, <><path d="M8 1l15 14v4l-7 4L1 11V7z" fill="#fff" /><path d="M1 7l15 12 7-4M16 19v4M6 11l7-6" /></>],
    ['Size', false, false, <circle cx="12" cy="12" r="3" fill="#111" />],
    ['Undo', false, false, <path d="M1 9l8-7v4h6c10 0 10 15 0 16v-4c5-1 4-7 0-7H9v5z" fill="#fff" />],
    ['Clear', false, false, <path d="M3 3h18v4H3zM4 7h16v16H4zM9 3V1h6v2M8 7v16M16 7v16" fill="#fff" />],
    ['Board', false, true, <><rect x="2" y="3" width="20" height="15" rx="2" fill="#fff" /><path d="M5 6h14v9H5z" fill="#ddd" /><path d="M8 3V1h8v2M8 18l-2 5M10 18l-2 5M14 18l2 5M16 18l2 5" /></>],
    ['Screenshot', false, false, <><path d="M1 5h6l1-3h6l1 3h8v16H1z" fill="#fff" /><circle cx="9" cy="12" r="6" fill="#999" /><circle cx="9" cy="12" r="3.500" fill="#111" /><circle cx="19" cy="9" r="1.500" /></>],
    ['Notes', false, false, <path d="M3 4h18v19H3zM6 4l6-4 6 4zM7 10h10M7 14h10M7 18h10" fill="#fff" />],
];

function PenPalette() {
    return (
        <div className="absolute left-[142px] top-[134px] z-10 flex w-[33px] flex-col items-center">
            <NibIcon size={31} />
            <div className="mt-1.5 flex w-[33px] flex-col items-center border border-[#555] bg-white pb-0.5 pt-0.5">
                {penTools.map(([name, on, more, shape]) => (
                    <button key={name} aria-label={name} className={`relative flex h-7 w-7 items-center justify-center text-[#222] ${on ? 'bg-[#36bbe2]' : ''}`}>
                        <Icon size={21} width={1.300}>{shape}</Icon>
                        {more && <span className="absolute bottom-0 right-0 border-b-[6px] border-l-[6px] border-b-black border-l-transparent" />}
                    </button>
                ))}
                <div className="mt-0.5 grid grid-cols-2">
                    <button aria-label="Cyan" className="h-3.5 w-3.5 bg-[#00aeff]" />
                    <button aria-label="Yellow" className="h-3.5 w-3.5 bg-[#ffff00]" />
                    <button aria-label="Magenta" className="h-3.5 w-3.5 bg-[#ff0d95]" />
                    <button aria-label="Black" className="h-3.5 w-3.5 bg-black" />
                </div>
                <button aria-label="Current colour" className="relative h-[27px] w-7 bg-[#ffff00]">
                    <span className="absolute bottom-0.5 right-px border-b-[7px] border-l-[7px] border-b-black border-l-transparent" />
                </button>
            </div>
        </div>
    );
}

export default function App() {
    return (
        <div className="relative flex h-screen flex-col overflow-hidden bg-[#0f161e] font-['Open_Sans','Noto_Sans',sans-serif] leading-none">
            <TabBar />
            <AddressBar />
            <main className="flex min-h-0 flex-1">
                <div className="flex min-w-0 flex-1 flex-col">
                    <TopToolbar />
                    <div className="flex min-h-0 flex-1">
                        <DrawingToolbar />
                        <div className="w-[3px] shrink-0 bg-[#232a34]" />
                        <div className="flex min-w-0 flex-1 flex-col">
                            <ChartPane />
                            <RangeBar />
                            <BottomTabs />
                        </div>
                    </div>
                </div>
                <Watchlist />
                <SideBar />
            </main>
            <DownloadBar />
            <Taskbar />
            <PenPalette />
        </div>
    );
}
